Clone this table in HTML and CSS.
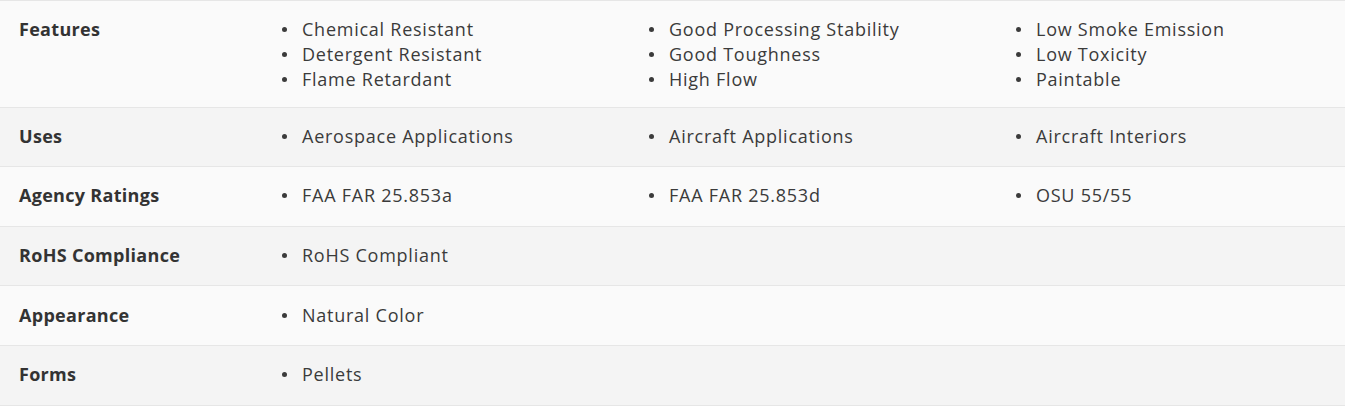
FILE: index.html
```html
<!DOCTYPE html>
<html lang="en">
<head>
<meta charset="utf-8">
<title>Properties</title>
<link rel="stylesheet" href="styles.css">
</head>
<body>
<div class="props">
  <div class="row">
    <div class="label">Features</div>
    <ul class="col">
      <li>Chemical Resistant</li>
      <li>Detergent Resistant</li>
      <li>Flame Retardant</li>
    </ul>
    <ul class="col">
      <li>Good Processing Stability</li>
      <li>Good Toughness</li>
      <li>High Flow</li>
    </ul>
    <ul class="col">
      <li>Low Smoke Emission</li>
      <li>Low Toxicity</li>
      <li>Paintable</li>
    </ul>
  </div>
  <div class="row">
    <div class="label">Uses</div>
    <ul class="col"><li>Aerospace Applications</li></ul>
    <ul class="col"><li>Aircraft Applications</li></ul>
    <ul class="col"><li>Aircraft Interiors</li></ul>
  </div>
  <div class="row">
    <div class="label">Agency Ratings</div>
    <ul class="col"><li>FAA FAR 25.853a</li></ul>
    <ul class="col"><li>FAA FAR 25.853d</li></ul>
    <ul class="col"><li>OSU 55/55</li></ul>
  </div>
  <div class="row">
    <div class="label">RoHS Compliance</div>
    <ul class="col"><li>RoHS Compliant</li></ul>
  </div>
  <div class="row">
    <div class="label">Appearance</div>
    <ul class="col"><li>Natural Color</li></ul>
  </div>
  <div class="row">
    <div class="label">Forms</div>
    <ul class="col"><li>Pellets</li></ul>
  </div>
</div>
</body>
</html>
```

FILE: styles.css
```css
* { box-sizing: border-box; }
html, body { margin: 0; padding: 0; background: #ffffff; }
body { font-family: "Open Sans", "Noto Sans", "Liberation Sans", sans-serif; color: #3b3b3b; }

.props {
  width: 1345px;
  border-top: 1px solid #e6e6e6;
}

.row {
  display: grid;
  grid-template-columns: 268px 367px 367px 1fr;
  padding: 16.3px 0 14.3px;
  border-bottom: 1px solid #e6e6e6;
  background: #fafafa;
}
.row:nth-child(even) { background: #f4f4f4; }

.label {
  padding: 0 0 4px 19px;
  font-size: 18px;
  font-weight: 700;
  letter-spacing: 0.3px;
  line-height: 24px;
  color: #333333;
}

.col {
  list-style: none;
  margin: 0;
  padding: 0 0 0 14px;
  font-size: 18px;
  letter-spacing: 0.75px;
  line-height: 25px;
}

.col li {
  display: flex;
  align-items: center;
  gap: 15px;
}
.col li::before {
  content: "";
  width: 5px;
  height: 5px;
  border-radius: 50%;
  background: #3b3b3b;
  flex: none;
}
```
